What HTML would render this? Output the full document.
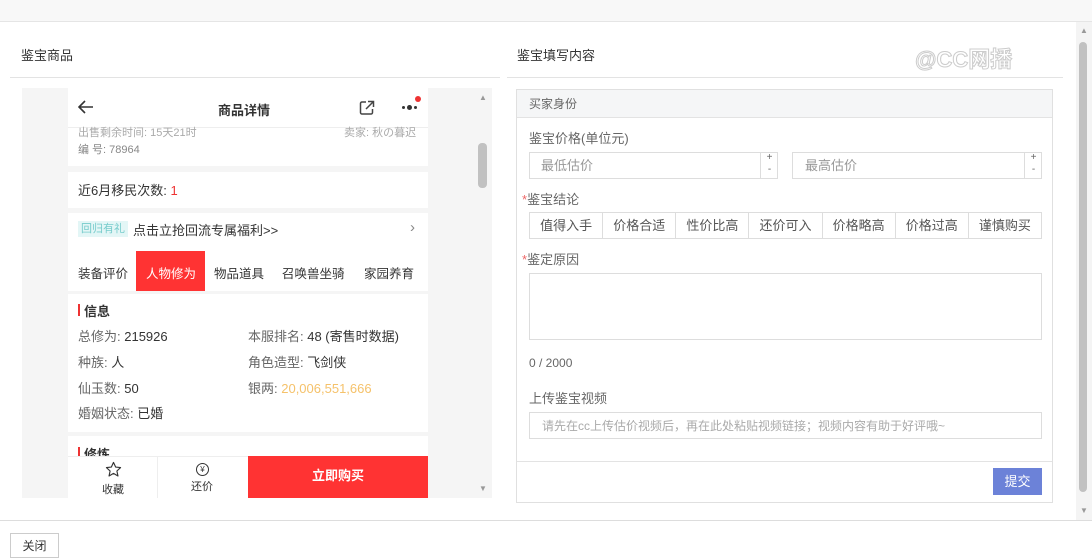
<!DOCTYPE html><html><head><meta charset="utf-8"><style>
*{box-sizing:border-box;margin:0;padding:0}
body{width:1092px;height:558px;overflow:hidden;background:#fff;font-family:"Liberation Sans","Noto Sans CJK SC",sans-serif;font-size:13px;color:#333;position:relative}
.a{position:absolute}
.g{color:#666}
</style></head><body>
<div class="a" style="left:0;top:0;width:1092px;height:22px;background:#f8f8f8;border-bottom:1px solid #e5e5e5"></div>
<div class="a" style="left:21px;top:45px;font-size:13px">鉴宝商品</div>
<div class="a" style="left:517px;top:45px;font-size:13px">鉴宝填写内容</div>
<div class="a" style="left:915px;top:42px;font-size:22px;color:#fff;font-weight:bold;-webkit-text-stroke:1px #ccc">@CC网播</div>
<div class="a" style="left:10px;top:77px;width:490px;border-top:1px solid #e3e3e3"></div>
<div class="a" style="left:507px;top:77px;width:556px;border-top:1px solid #e3e3e3"></div>
<div class="a" style="left:1076px;top:22px;width:16px;height:498px;background:#f4f4f4"></div>
<div class="a" style="left:1079px;top:42px;width:8px;height:450px;background:#c1c1c1;border-radius:4px"></div>
<div class="a" style="left:1080px;top:26px;font-size:8px;color:#999">▲</div>
<div class="a" style="left:1080px;top:506px;font-size:8px;color:#999">▼</div>
<div class="a" style="left:22px;top:88px;width:470px;height:410px;background:#f5f5f5"></div>
<div class="a" style="left:478px;top:143px;width:9px;height:45px;background:#c1c1c1;border-radius:4px"></div>
<div class="a" style="left:479px;top:93px;font-size:8px;color:#999">▲</div>
<div class="a" style="left:479px;top:484px;font-size:8px;color:#999">▼</div>
<div class="a" style="left:68px;top:88px;width:360px;height:410px;overflow:hidden;background:#f5f5f5">
 <div class="a" style="left:0;top:0;width:360px;height:40px;background:#fff;border-bottom:1px solid #eee"></div>
 <svg class="a" style="left:10px;top:12px" width="16" height="14" viewBox="0 0 16 14"><path d="M15 7H2M7 1L1 7l6 6" fill="none" stroke="#333" stroke-width="1.6"/></svg>
 <div class="a" style="left:150px;top:12px;font-weight:bold;font-size:13px">商品详情</div>
 <svg class="a" style="left:291px;top:12px" width="16" height="16" viewBox="0 0 16 16"><path d="M7 2H3a1.5 1.5 0 0 0-1.5 1.5v9A1.5 1.5 0 0 0 3 14h9a1.5 1.5 0 0 0 1.5-1.5V9M9 1.5h5.5V7M14.5 1.5L7 9" fill="none" stroke="#444" stroke-width="1.5"/></svg>
 <div class="a" style="left:334px;top:18px;width:3px;height:3px;border-radius:2px;background:#333"></div>
 <div class="a" style="left:339px;top:17px;width:5px;height:5px;border-radius:3px;background:#333"></div>
 <div class="a" style="left:346px;top:18px;width:3px;height:3px;border-radius:2px;background:#333"></div>
 <div class="a" style="left:347px;top:8px;width:6px;height:6px;border-radius:3px;background:#e33"></div>
 <div class="a" style="left:0;top:40px;width:360px;height:38px;background:#fff"></div>
 <div class="a" style="left:10px;top:36px;font-size:11px;color:#aaa">出售剩余时间: 15天21时</div>
 <div class="a" style="left:276px;top:36px;font-size:11px;color:#aaa">卖家: 秋の暮迟</div>
 <div class="a" style="left:10px;top:53px;font-size:11px;color:#888">编 号: 78964</div>
 <div class="a" style="left:0;top:84px;width:360px;height:36px;background:#fff"></div>
 <div class="a" style="left:10px;top:92px">近6月移民次数: <span style="color:#e33">1</span></div>
 <div class="a" style="left:0;top:125px;width:360px;height:78px;background:#fff"></div>
 <div class="a" style="left:10px;top:133px;padding:0 3px;background:#e3f6f6;color:#7cc;font-size:11px;height:16px;line-height:16px">回归有礼</div>
 <div class="a" style="left:65px;top:132px">点击立抢回流专属福利&gt;&gt;</div>
 <div class="a" style="left:342px;top:131px;color:#888;font-size:15px">›</div>
 <div class="a" style="left:68px;top:163px;width:69px;height:40px;background:#f33"></div>
 <div class="a" style="left:10px;top:175px;font-size:12.5px">装备评价</div>
 <div class="a" style="left:78px;top:175px;font-size:12.5px;color:#fff">人物修为</div>
 <div class="a" style="left:146px;top:175px;font-size:12.5px">物品道具</div>
 <div class="a" style="left:214px;top:175px;font-size:12.5px">召唤兽坐骑</div>
 <div class="a" style="left:296px;top:175px;font-size:12.5px">家园养育</div>
 <div class="a" style="left:0;top:206px;width:360px;height:138px;background:#fff"></div>
 <div class="a" style="left:10px;top:216px;width:2px;height:12px;background:#e33"></div>
 <div class="a" style="left:16px;top:213px;font-weight:bold">信息</div>
 <div class="a" style="left:10px;top:238px"><span class="g">总修为: </span>215926</div>
 <div class="a" style="left:180px;top:238px"><span class="g">本服排名: </span>48 (寄售时数据)</div>
 <div class="a" style="left:10px;top:264px"><span class="g">种族: </span>人</div>
 <div class="a" style="left:180px;top:264px"><span class="g">角色造型: </span>飞剑侠</div>
 <div class="a" style="left:10px;top:290px"><span class="g">仙玉数: </span>50</div>
 <div class="a" style="left:180px;top:290px"><span class="g">银两: </span><span style="color:#f5c26b">20,006,551,666</span></div>
 <div class="a" style="left:10px;top:315px"><span class="g">婚姻状态: </span>已婚</div>
 <div class="a" style="left:0;top:348px;width:360px;height:30px;background:#fff"></div>
 <div class="a" style="left:10px;top:359px;width:2px;height:12px;background:#e33"></div>
 <div class="a" style="left:16px;top:356px;font-weight:bold">修炼</div>
 <div class="a" style="left:0;top:368px;width:180px;height:42px;background:#fff;border-top:1px solid #eee"></div>
 <div class="a" style="left:89px;top:368px;width:1px;height:42px;background:#eee"></div>
 <svg class="a" style="left:37px;top:373px" width="17" height="17" viewBox="0 0 24 24"><path d="M12 2l3 6.5 7 .8-5.2 4.8 1.5 7-6.3-3.6-6.3 3.6 1.5-7L2 9.3l7-.8z" fill="none" stroke="#333" stroke-width="1.6" stroke-linejoin="round"/></svg>
 <div class="a" style="left:34px;top:393px;font-size:11px">收藏</div>
 <div class="a" style="left:128px;top:375px;width:13px;height:13px;border:1.2px solid #333;border-radius:50%;font-size:8px;text-align:center;line-height:11px">¥</div>
 <div class="a" style="left:123px;top:390px;font-size:11px">还价</div>
 <div class="a" style="left:180px;top:368px;width:180px;height:42px;background:#f33;color:#fff;font-weight:bold;text-align:center;line-height:40px">立即购买</div>
</div>
<div class="a" style="left:516px;top:89px;width:537px;height:414px;border:1px solid #e0e0e0"></div>
<div class="a" style="left:517px;top:90px;width:535px;height:28px;background:#f5f6f7;border-bottom:1px solid #e3e3e3"></div>
<div class="a g" style="left:529px;top:95px;font-size:12px">买家身份</div>
<div class="a g" style="left:529px;top:128px">鉴宝价格(单位元)</div>
<div class="a" style="left:529px;top:152px;width:249px;height:27px;border:1px solid #ddd"></div>
<div class="a" style="left:760px;top:152px;width:18px;height:27px;border-left:1px solid #ddd;font-size:10px;text-align:center;line-height:12px;color:#666">+<br>-</div>
<div class="a" style="left:541px;top:155px;color:#999">最低估价</div>
<div class="a" style="left:792px;top:152px;width:250px;height:27px;border:1px solid #ddd"></div>
<div class="a" style="left:1024px;top:152px;width:18px;height:27px;border-left:1px solid #ddd;font-size:10px;text-align:center;line-height:12px;color:#666">+<br>-</div>
<div class="a" style="left:805px;top:155px;color:#999">最高估价</div>
<div class="a g" style="left:522px;top:189px"><span style="color:#e66">*</span>鉴宝结论</div>
<div class="a" style="left:529px;top:212px;width:513px;height:27px;border:1px solid #ddd;display:flex">
<div style="flex:1;text-align:center;line-height:25px;border-right:1px solid #ddd;color:#555">值得入手</div><div style="flex:1;text-align:center;line-height:25px;border-right:1px solid #ddd;color:#555">价格合适</div><div style="flex:1;text-align:center;line-height:25px;border-right:1px solid #ddd;color:#555">性价比高</div><div style="flex:1;text-align:center;line-height:25px;border-right:1px solid #ddd;color:#555">还价可入</div><div style="flex:1;text-align:center;line-height:25px;border-right:1px solid #ddd;color:#555">价格略高</div><div style="flex:1;text-align:center;line-height:25px;border-right:1px solid #ddd;color:#555">价格过高</div><div style="flex:1;text-align:center;line-height:25px;color:#555">谨慎购买</div></div>
<div class="a g" style="left:522px;top:249px"><span style="color:#e66">*</span>鉴定原因</div>
<div class="a" style="left:529px;top:273px;width:513px;height:67px;border:1px solid #ddd"></div>
<div class="a" style="left:529px;top:356px;color:#666;font-size:12px">0 / 2000</div>
<div class="a g" style="left:529px;top:388px">上传鉴宝视频</div>
<div class="a" style="left:529px;top:412px;width:513px;height:27px;border:1px solid #ddd"></div>
<div class="a" style="left:542px;top:417px;color:#aaa;font-size:12px">请先在cc上传估价视频后，再在此处粘贴视频链接；视频内容有助于好评哦~</div>
<div class="a" style="left:517px;top:461px;width:535px;border-top:1px solid #e3e3e3"></div>
<div class="a" style="left:993px;top:468px;width:49px;height:27px;background:#6c82d8;color:#fff;text-align:center;line-height:27px">提交</div>
<div class="a" style="left:0;top:520px;width:1092px;border-top:1px solid #ddd"></div>
<div class="a" style="left:10px;top:533px;width:49px;height:25px;border:1px solid #ccc;text-align:center;line-height:24px;font-size:12px">关闭</div>
</body></html>
